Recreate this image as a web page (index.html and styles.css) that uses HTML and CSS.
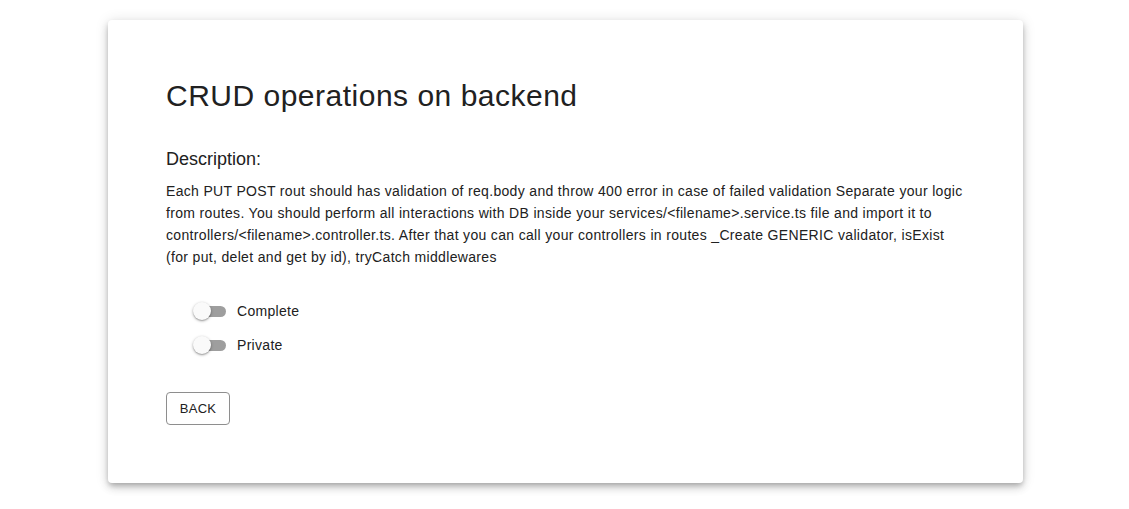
FILE: index.html
```html
<!DOCTYPE html>
<html>
<head>
<meta charset="utf-8">
<link rel="stylesheet" href="styles.css">
</head>
<body>
<div class="page">
  <div class="card">
    <h1 class="title">CRUD operations on backend</h1>
    <h2 class="subtitle">Description:</h2>
    <p class="desc">Each PUT POST rout should has validation of req.body and throw 400 error in case of failed validation Separate your logic from routes. You should perform all interactions with DB inside your services/&lt;filename&gt;.service.ts file and import it to controllers/&lt;filename&gt;.controller.ts. After that you can call your controllers in routes _Create GENERIC validator, isExist (for put, delet and get by id), tryCatch middlewares</p>
    <div class="switches">
      <label class="switch-row"><span class="switch"><span class="track"></span><span class="thumb"></span></span><span class="label">Complete</span></label>
      <label class="switch-row"><span class="switch"><span class="track"></span><span class="thumb"></span></span><span class="label">Private</span></label>
    </div>
    <button class="btn">BACK</button>
  </div>
</div>
</body>
</html>
```

FILE: styles.css
```css
* { box-sizing: border-box; }
html, body { margin: 0; padding: 0; background: #fff; }
body { font-family: "Liberation Sans", Arial, sans-serif; color: #212121; }
.page { display: flex; justify-content: center; padding: 20px 0 26px 2px; }
.card {
  width: 915px;
  height: 463px;
  background: #fff;
  border-radius: 4px;
  box-shadow: 0 3px 5px -1px rgba(0,0,0,0.2), 0 5px 8px 0 rgba(0,0,0,0.14), 0 1px 14px 0 rgba(0,0,0,0.12);
  padding: 58px 58px 0 58px;
}
.title { margin: 0; font-size: 30px; font-weight: 400; line-height: 36px; color: #212121; letter-spacing: 0.5px; }
.subtitle { margin: 33px 0 0 0; font-size: 18px; font-weight: 400; line-height: 24px; color: #212121; }
.desc { margin: 9px 0 0 0; font-size: 14px; line-height: 22px; color: #212121; width: 799px; letter-spacing: 0.33px; }
.switches { display: flex; flex-direction: column; gap: 14px; margin-top: 33px; padding-left: 27px; }
.switch-row { display: flex; align-items: center; gap: 10px; height: 20px; }
.switch { position: relative; width: 34px; height: 20px; display: block; }
.track { position: absolute; left: 7px; top: 5px; width: 26px; height: 11px; border-radius: 6px; background: #9e9e9e; }
.thumb { position: absolute; left: 0; top: 1px; width: 18px; height: 18px; border-radius: 50%; background: #fafafa; box-shadow: 0 1px 3px rgba(0,0,0,0.35), 0 1px 1px rgba(0,0,0,0.14); }
.label { font-size: 14px; color: #212121; letter-spacing: 0.3px; }
.btn {
  margin-top: 37px;
  display: block;
  height: 33px;
  width: 64px;
  padding: 0;
  font-family: "Liberation Sans", Arial, sans-serif;
  font-size: 13px;
  color: #212121;
  background: #fff;
  border: 1px solid #8e8e8e;
  border-radius: 4px;
  letter-spacing: 0.3px;
}
```
